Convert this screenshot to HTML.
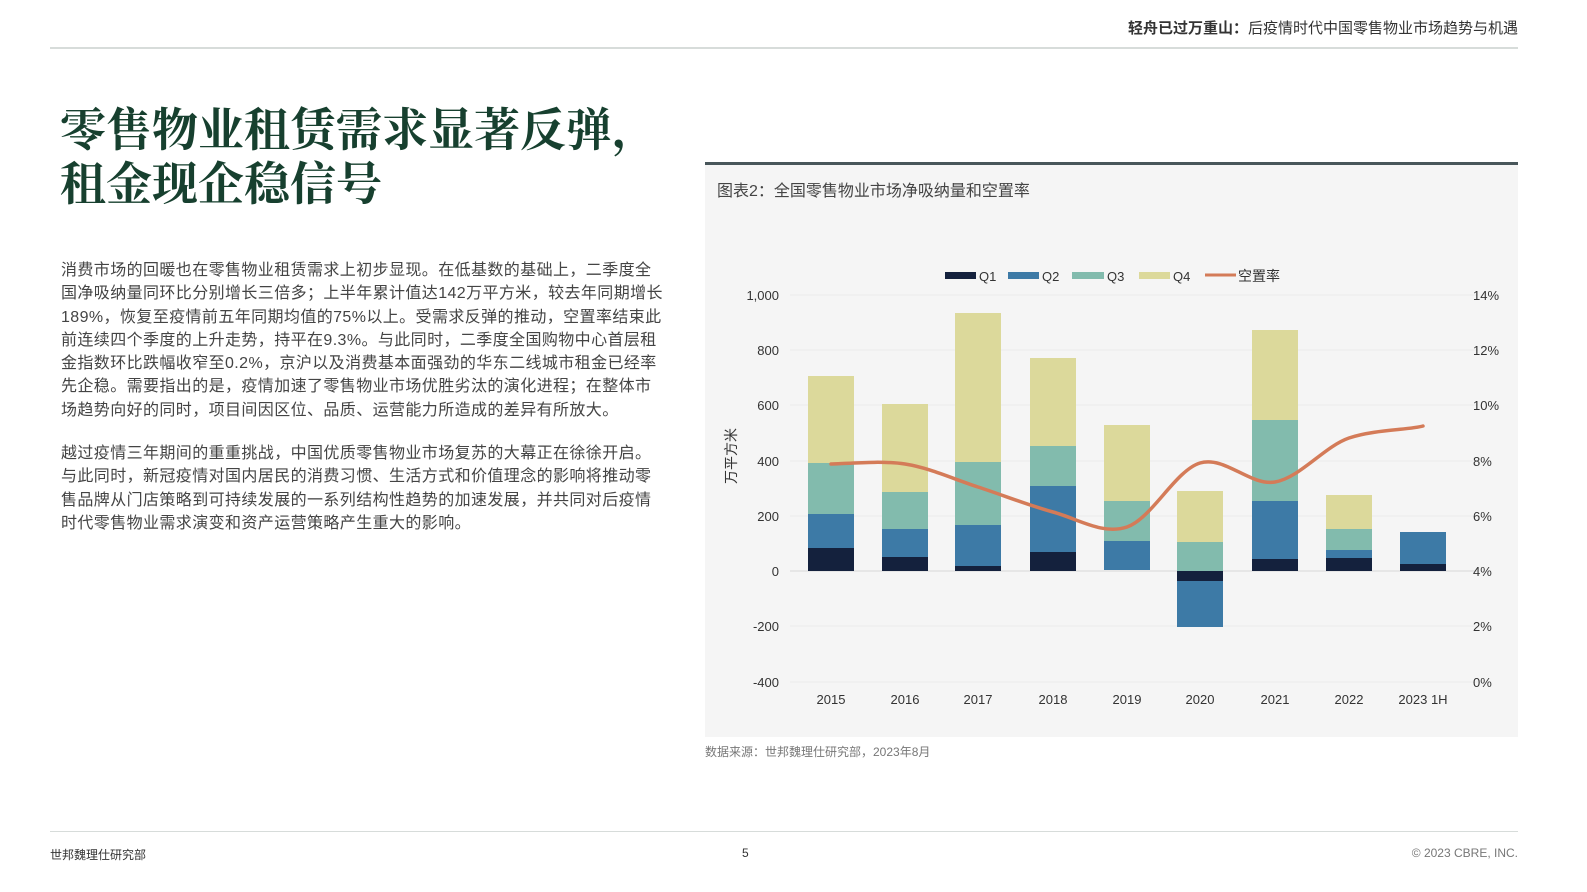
<!DOCTYPE html>
<html><head><meta charset="utf-8">
<style>
body{margin:0;width:1587px;height:892px;background:#fff;position:relative;overflow:hidden;font-family:"Liberation Sans","Noto Sans CJK SC",sans-serif;}
.a{position:absolute;white-space:nowrap;}
</style></head><body>
<div class="a" style="right:69px;top:17px;font-size:15px;color:#333;"><b>轻舟已过万重山：</b>后疫情时代中国零售物业市场趋势与机遇</div>
<div class="a" style="left:50px;top:47px;width:1468px;height:2px;background:#d7dcda;"></div>
<div class="a" style="left:60px;top:104px;font-family:'Liberation Serif','Noto Serif CJK SC',serif;font-size:46px;line-height:54px;font-weight:bold;color:#17402f;">零售物业租赁需求显著反弹，<br>租金现企稳信号</div>
<div class="a" style="left:61px;top:259px;font-size:16px;line-height:23.3px;color:#444;letter-spacing:0.4px;">消费市场的回暖也在零售物业租赁需求上初步显现。在低基数的基础上，二季度全<br>国净吸纳量同环比分别增长三倍多；上半年累计值达142万平方米，较去年同期增长<br>189%，恢复至疫情前五年同期均值的75%以上。受需求反弹的推动，空置率结束此<br>前连续四个季度的上升走势，持平在9.3%。与此同时，二季度全国购物中心首层租<br>金指数环比跌幅收窄至0.2%，京沪以及消费基本面强劲的华东二线城市租金已经率<br>先企稳。需要指出的是，疫情加速了零售物业市场优胜劣汰的演化进程；在整体市<br>场趋势向好的同时，项目间因区位、品质、运营能力所造成的差异有所放大。</div>
<div class="a" style="left:61px;top:442px;font-size:16px;line-height:23.3px;color:#444;letter-spacing:0.4px;">越过疫情三年期间的重重挑战，中国优质零售物业市场复苏的大幕正在徐徐开启。<br>与此同时，新冠疫情对国内居民的消费习惯、生活方式和价值理念的影响将推动零<br>售品牌从门店策略到可持续发展的一系列结构性趋势的加速发展，并共同对后疫情<br>时代零售物业需求演变和资产运营策略产生重大的影响。</div>
<div class="a" style="left:705px;top:162px;width:813px;height:575px;background:#f5f5f5;border-top:3px solid #48565a;box-sizing:border-box;"></div>
<div class="a" style="left:717px;top:177px;font-size:16px;color:#444;">图表2：全国零售物业市场净吸纳量和空置率</div>
<svg class="a" style="left:0;top:0" width="1587" height="892" font-family="Liberation Sans, Noto Sans CJK SC, sans-serif" font-size="13" fill="#333">
<g stroke="#ebebeb" stroke-width="1">
<line x1="790" y1="295" x2="1478" y2="295"/><line x1="790" y1="350" x2="1478" y2="350"/><line x1="790" y1="405" x2="1478" y2="405"/><line x1="790" y1="461" x2="1478" y2="461"/><line x1="790" y1="516" x2="1478" y2="516"/><line x1="790" y1="626" x2="1478" y2="626"/><line x1="790" y1="682" x2="1478" y2="682"/>
</g>
<line x1="790" y1="571" x2="1478" y2="571" stroke="#e2e2e2" stroke-width="1.5"/>
<g text-anchor="end"><text x="779" y="300">1,000</text><text x="779" y="355">800</text><text x="779" y="410">600</text><text x="779" y="466">400</text><text x="779" y="521">200</text><text x="779" y="576">0</text><text x="779" y="631">-200</text><text x="779" y="687">-400</text></g>
<g><text x="1473" y="300">14%</text><text x="1473" y="355">12%</text><text x="1473" y="410">10%</text><text x="1473" y="466">8%</text><text x="1473" y="521">6%</text><text x="1473" y="576">4%</text><text x="1473" y="631">2%</text><text x="1473" y="687">0%</text></g>
<g text-anchor="middle"><text x="831" y="704">2015</text><text x="905" y="704">2016</text><text x="978" y="704">2017</text><text x="1053" y="704">2018</text><text x="1127" y="704">2019</text><text x="1200" y="704">2020</text><text x="1275" y="704">2021</text><text x="1349" y="704">2022</text><text x="1423" y="704">2023 1H</text></g>
<text transform="translate(736,456) rotate(-90)" text-anchor="middle" font-size="14">万平方米</text>
<rect x="945" y="272" width="31" height="7" fill="#14213d"/><text x="979" y="281">Q1</text>
<rect x="1008" y="272" width="31" height="7" fill="#3d7aa6"/><text x="1042" y="281">Q2</text>
<rect x="1072" y="272" width="32" height="7" fill="#82bbad"/><text x="1107" y="281">Q3</text>
<rect x="1139" y="272" width="31" height="7" fill="#dcd99b"/><text x="1173" y="281">Q4</text>
<line x1="1205" y1="275" x2="1236" y2="275" stroke="#d47b58" stroke-width="3"/><text x="1238" y="281" font-size="14">空置率</text>
<g>
<rect x="808" y="548" width="46" height="23" fill="#14213d"/><rect x="808" y="514" width="46" height="34" fill="#3d7aa6"/><rect x="808" y="463" width="46" height="51" fill="#82bbad"/><rect x="808" y="376" width="46" height="87" fill="#dcd99b"/>
<rect x="882" y="557" width="46" height="14" fill="#14213d"/><rect x="882" y="529" width="46" height="28" fill="#3d7aa6"/><rect x="882" y="492" width="46" height="37" fill="#82bbad"/><rect x="882" y="404" width="46" height="88" fill="#dcd99b"/>
<rect x="955" y="566" width="46" height="5" fill="#14213d"/><rect x="955" y="525" width="46" height="41" fill="#3d7aa6"/><rect x="955" y="462" width="46" height="63" fill="#82bbad"/><rect x="955" y="313" width="46" height="149" fill="#dcd99b"/>
<rect x="1030" y="552" width="46" height="19" fill="#14213d"/><rect x="1030" y="486" width="46" height="66" fill="#3d7aa6"/><rect x="1030" y="446" width="46" height="40" fill="#82bbad"/><rect x="1030" y="358" width="46" height="88" fill="#dcd99b"/>
<rect x="1104" y="541" width="46" height="29" fill="#3d7aa6"/><rect x="1104" y="501" width="46" height="40" fill="#82bbad"/><rect x="1104" y="425" width="46" height="76" fill="#dcd99b"/>
<rect x="1177" y="571" width="46" height="10" fill="#14213d"/><rect x="1177" y="581" width="46" height="46" fill="#3d7aa6"/><rect x="1177" y="542" width="46" height="29" fill="#82bbad"/><rect x="1177" y="491" width="46" height="51" fill="#dcd99b"/>
<rect x="1252" y="559" width="46" height="12" fill="#14213d"/><rect x="1252" y="501" width="46" height="58" fill="#3d7aa6"/><rect x="1252" y="420" width="46" height="81" fill="#82bbad"/><rect x="1252" y="330" width="46" height="90" fill="#dcd99b"/>
<rect x="1326" y="558" width="46" height="13" fill="#14213d"/><rect x="1326" y="550" width="46" height="8" fill="#3d7aa6"/><rect x="1326" y="529" width="46" height="21" fill="#82bbad"/><rect x="1326" y="495" width="46" height="34" fill="#dcd99b"/>
<rect x="1400" y="564" width="46" height="7" fill="#14213d"/><rect x="1400" y="532" width="46" height="32" fill="#3d7aa6"/>
</g>
<path d="M831,464 C843.3,464 880.5,460.2 905,464 C929.5,467.8 953.3,479 978,487 C1002.7,495 1028.2,505.3 1053,512 C1077.8,518.7 1102.5,535.2 1127,527 C1151.5,518.8 1175.3,470.5 1200,463 C1224.7,455.5 1250.2,486.2 1275,482 C1299.8,477.8 1324.3,446.5 1349,438 C1373.7,429.5 1410.7,429.8 1423,426" fill="none" stroke="#d47b58" stroke-width="3.5" stroke-linecap="round"/>
</svg>
<div class="a" style="left:705px;top:743px;font-size:12px;color:#777;">数据来源：世邦魏理仕研究部，2023年8月</div>
<div class="a" style="left:50px;top:831px;width:1468px;height:1px;background:#d7dcda;"></div>
<div class="a" style="left:50px;top:846px;font-size:12px;color:#333;">世邦魏理仕研究部</div>
<div class="a" style="left:742px;top:846px;font-size:12px;color:#333;">5</div>
<div class="a" style="right:69px;top:846px;font-size:12px;color:#777;">© 2023 CBRE, INC.</div>
</body></html>
